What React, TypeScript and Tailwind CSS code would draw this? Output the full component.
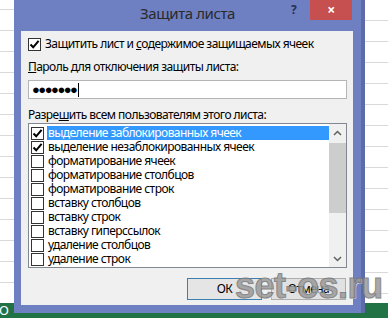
import React from "react";

const items = [
  { t: "выделение заблокированных ячеек", c: true, sel: true },
  { t: "выделение незаблокированных ячеек", c: true },
  { t: "форматирование ячеек" },
  { t: "форматирование столбцов" },
  { t: "форматирование строк" },
  { t: "вставку столбцов" },
  { t: "вставку строк" },
  { t: "вставку гиперссылок" },
  { t: "удаление столбцов" },
  { t: "удаление строк" },
];

function Check({ on }: { on?: boolean }) {
  return (
    <div className="w-[13px] h-[13px] shrink-0 border border-[#333] bg-white flex items-center justify-center">
      {on && (
        <svg width="11" height="11" viewBox="0 0 11 11">
          <path d="M1.5 5.5 L4.2 8.3 L9.6 1.8" fill="none" stroke="#000" strokeWidth="2" />
        </svg>
      )}
    </div>
  );
}

export default function App() {
  return (
    <div className="relative w-[388px] h-[318px] overflow-hidden bg-white font-['Segoe_UI','Noto_Sans',sans-serif] text-[12px] tracking-[-0.55px] text-black">
      {/* sheet background */}
      <div className="flex flex-col h-full">
        <div className="flex flex-1">
          <div className="w-[14px] bg-[repeating-linear-gradient(to_bottom,transparent_0,transparent_20px,#d9d9d9_20px,#d9d9d9_21px)] bg-[position:0_-11px]" />
          <div className="flex-1" />
          <div className="w-[23px] bg-[repeating-linear-gradient(to_bottom,transparent_0,transparent_20px,#d9d9d9_20px,#d9d9d9_21px)] bg-[position:0_0px]" />
        </div>
        <div className="h-[15px] bg-[#217346] text-white text-[13px] leading-[15px] overflow-hidden whitespace-nowrap">
          <span className="ml-[-1px]">О</span>
        </div>
      </div>

      {/* dialog window */}
      <div className="absolute left-[14px] top-0 w-[351px] h-[313px] bg-[#6e7fc2] border-r-4 border-[#5d6ca8] flex flex-col">
        <div className="h-[31px] relative flex items-center justify-center">
          <span className="text-[15px] tracking-[-0.4px] text-[#2a2a2a] mt-[-4px]">Защита листа</span>
          <span className="absolute left-[277px] top-[1px] text-[12px] font-bold text-[#26304f]">?</span>
          <div className="absolute left-[296px] top-0 w-[42px] h-[20px] bg-[#c64f4f] flex items-center justify-center text-white text-[14px] leading-none font-bold">
            ×
          </div>
        </div>
        <div className="ml-[7px] mr-[8px] h-[274px] bg-[#f0f0f0] px-[7px] pt-[6px] flex flex-col">
          <div className="flex items-center h-[14px] gap-[4px]">
            <Check on />
            <span className="whitespace-nowrap">
              Защитить лист и <u>с</u>одержимое защищаемых ячеек
            </span>
          </div>
          <div className="h-[14px] mt-[9px] flex items-center">
            <span className="whitespace-nowrap">
              <u>П</u>ароль для отключения защиты листа:
            </span>
          </div>
          <div className="mt-[6px] h-[19px] w-[319px] bg-white border border-[#b5b5b5] flex items-center pl-[3px]">
            <span className="text-[13px] tracking-[-1.5px] leading-none">●●●●●●●</span>
            <span className="w-px h-[14px] bg-black ml-[2px]" />
          </div>
          <div className="h-[14px] mt-[9px] flex items-center">
            <span className="whitespace-nowrap">
              Разре<u>ш</u>ить всем пользователям этого листа:
            </span>
          </div>
          <div className="mt-[1px] w-[319px] h-[145px] bg-white border border-[#828790] flex">
            <div className="flex-1 pt-[2px] pl-[2px] flex flex-col">
              {items.map((it, i) => (
                <div key={i} className="h-[14px] flex items-center">
                  <Check on={it.c} />
                  <span
                    className={
                      "ml-[3px] h-[14px] flex-1 pl-[1px] leading-[14px] whitespace-nowrap " +
                      (it.sel ? "bg-[#3399ff] text-white" : "")
                    }
                  >
                    {it.t}
                  </span>
                </div>
              ))}
            </div>
            <div className="w-[17px] bg-[#f0f0f0] flex flex-col items-center">
              <div className="h-[17px] w-full flex items-center justify-center">
                <svg width="9" height="6" viewBox="0 0 9 6">
                  <path d="M1 5 L4.5 1.5 L8 5" fill="none" stroke="#606060" strokeWidth="1.5" />
                </svg>
              </div>
              <div className="w-full h-[70px] mt-[2px] bg-[#cdcdcd]" />
              <div className="flex-1" />
              <div className="h-[17px] w-full flex items-center justify-center">
                <svg width="9" height="6" viewBox="0 0 9 6">
                  <path d="M1 1 L4.5 4.5 L8 1" fill="none" stroke="#606060" strokeWidth="1.5" />
                </svg>
              </div>
            </div>
          </div>
          <div className="mt-[10px] flex justify-end gap-[9px]">
            <div className="w-[75px] h-[22px] border border-[#3c7fb1] bg-[#e5e5e5] flex items-center justify-center">
              ОК
            </div>
            <div className="w-[75px] h-[22px] border border-[#adadad] bg-[#e1e1e1] flex items-center justify-center">
              Отмена
            </div>
          </div>
        </div>
      </div>

      {/* watermark */}
      <div className="absolute left-[235px] top-[268px] whitespace-nowrap text-[36px] leading-none font-bold font-['Liberation_Sans',sans-serif] tracking-[-0.5px] text-[#9b9b9b] opacity-85 [-webkit-text-stroke:1px_#777] [text-shadow:1px_1px_0_#e8e8e8]">
        set-os.ru
      </div>
    </div>
  );
}
